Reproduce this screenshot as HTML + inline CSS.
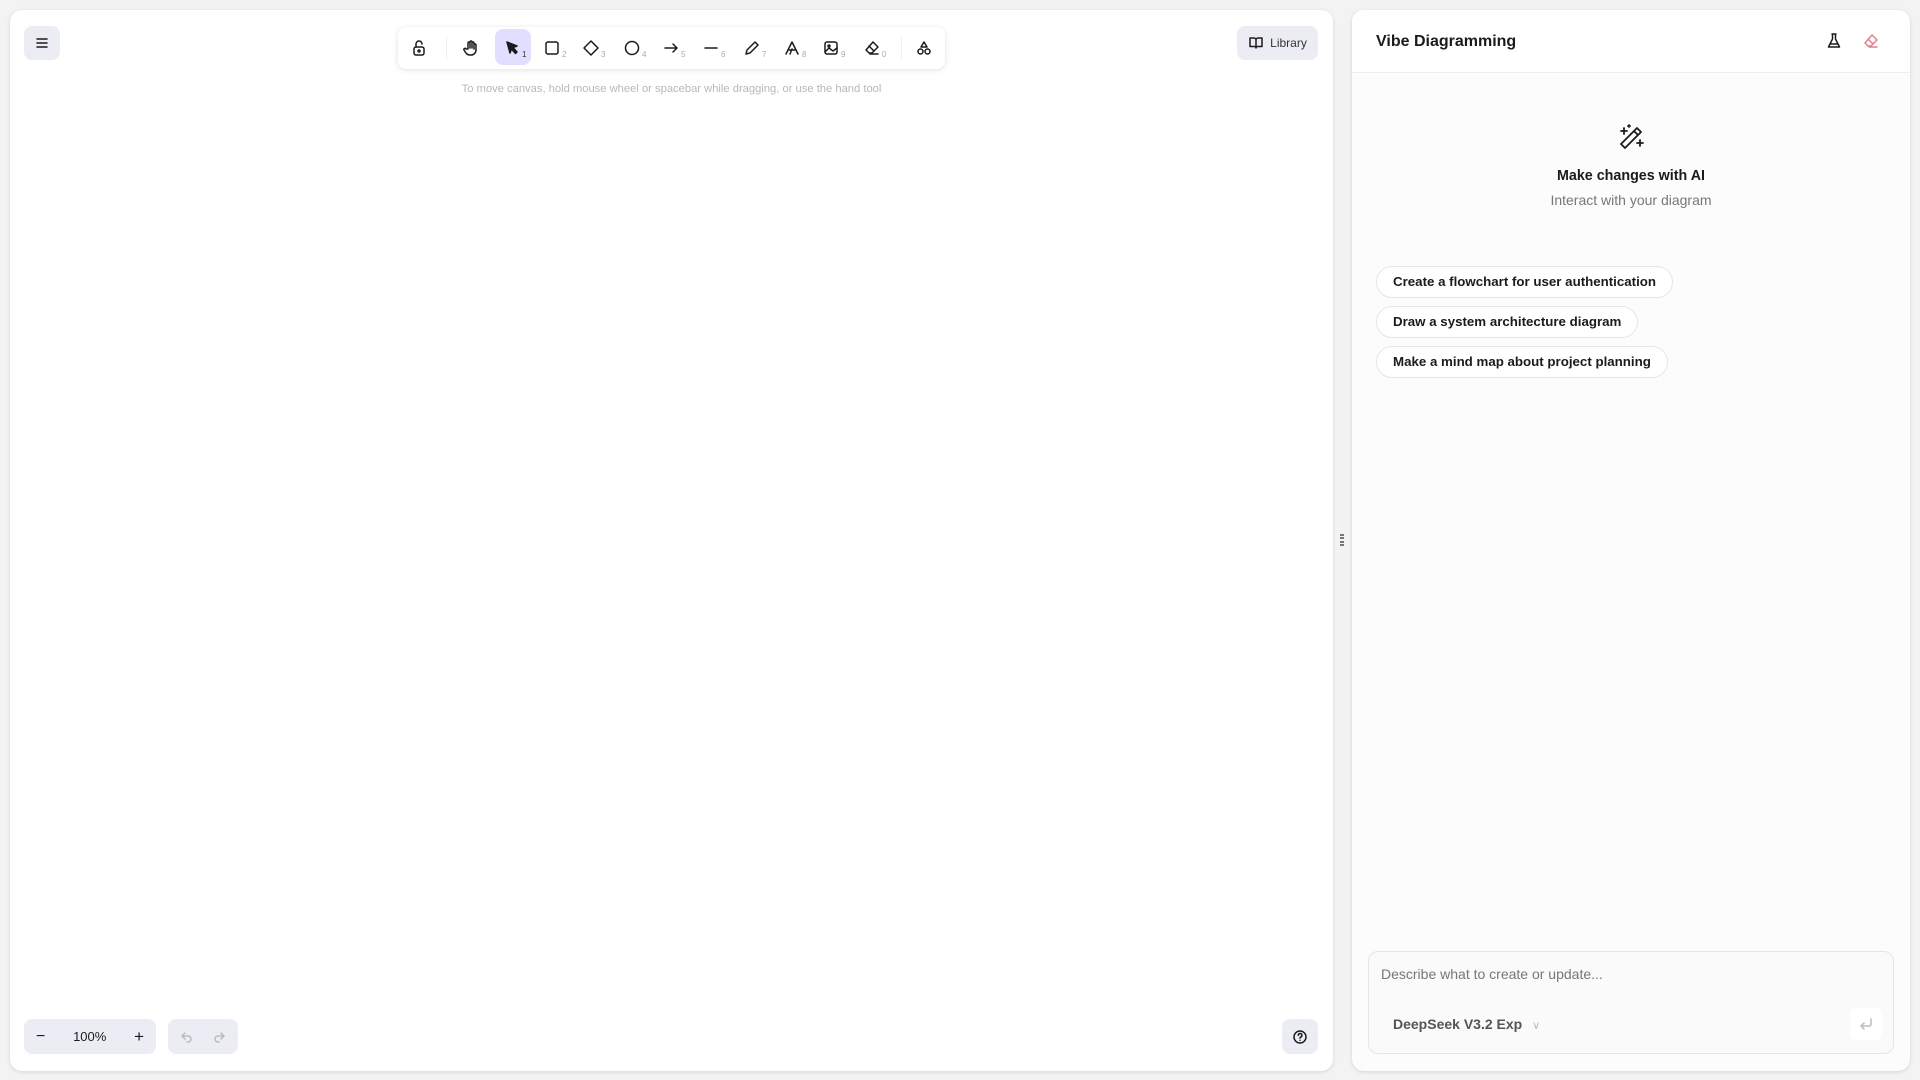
<!DOCTYPE html>
<html><head><meta charset="utf-8"><style>
*{box-sizing:border-box;margin:0;padding:0}
body{width:1920px;height:1080px;background:#f3f3f4;font-family:"Liberation Sans",sans-serif;position:relative;overflow:hidden}
.abs{position:absolute}
.canvas{left:10px;top:10px;width:1323px;height:1061px;background:#fff;border-radius:12px;box-shadow:0 1px 4px rgba(0,0,0,.12)}
.panel{left:1352px;top:10px;width:558px;height:1061px;background:#fcfcfc;border-radius:12px;box-shadow:0 1px 4px rgba(0,0,0,.12);overflow:hidden}
.btn{background:#ececf4;border-radius:8px;display:flex;align-items:center;justify-content:center}
.tb{left:398px;top:27px;width:547px;height:42px;background:#fff;border-radius:8px;box-shadow:0 1px 6px rgba(0,0,0,.12)}
.ic{position:absolute;top:11px;width:20px;height:20px}
.num{position:absolute;top:23px;font-size:8px;color:#aaa}
svg{fill:none;stroke:#1b1b1f;stroke-width:1.5;stroke-linecap:round;stroke-linejoin:round}
.chip{position:absolute;left:24px;height:32px;border:1px solid #e6e6e6;border-radius:16px;background:#fff;font-size:13.3px;font-weight:bold;color:#1b1b1f;padding:0 16px;line-height:30px;white-space:nowrap}
</style></head><body>
<div class="abs canvas"></div>
<div class="abs btn" style="left:24px;top:26px;width:36px;height:34px"><svg width="16" height="16" viewBox="0 0 16 16"><path d="M3 4h10M3 8h10M3 12h10"/></svg></div>
<div class="abs tb">
 <svg class="ic" style="left:11px" viewBox="0 0 20 20"><rect x="5" y="9" width="10" height="8" rx="2"/><path d="M7 9V6a3 3 0 0 1 6 0"/><circle cx="10" cy="13" r="1"/></svg>
 <div class="abs" style="left:48px;top:10px;width:1px;height:22px;background:#eee"></div>
 <svg class="ic" style="left:63px" viewBox="0 0 20 20"><path d="M7 11V5a1 1 0 0 1 2 0v5V4a1 1 0 0 1 2 0v6V5a1 1 0 0 1 2 0v6V7a1 1 0 0 1 2 0v5a5 5 0 0 1-5 5h-1a5 5 0 0 1-4-2l-2-3a1 1 0 0 1 2-1z"/></svg>
 <div class="abs" style="left:97px;top:2px;width:36px;height:36px;background:#e0dfff;border-radius:8px"></div>
 <svg class="ic" style="left:104px" viewBox="0 0 20 20"><path d="M5 4l10 4-4 1.5L15 14l-1.5 1.5L9.5 11 8 15z" fill="#1b1b1f"/></svg><span class="num" style="left:124px;color:#333">1</span>
 <svg class="ic" style="left:144px" viewBox="0 0 20 20"><rect x="4" y="4" width="12" height="12" rx="2"/></svg><span class="num" style="left:164px">2</span>
 <svg class="ic" style="left:183px" viewBox="0 0 20 20"><path d="M10 3l7 7-7 7-7-7z"/></svg><span class="num" style="left:203px">3</span>
 <svg class="ic" style="left:224px" viewBox="0 0 20 20"><circle cx="10" cy="10" r="6.5"/></svg><span class="num" style="left:244px">4</span>
 <svg class="ic" style="left:263px" viewBox="0 0 20 20"><path d="M4 10h12M12 6l4 4-4 4"/></svg><span class="num" style="left:283px">5</span>
 <svg class="ic" style="left:303px" viewBox="0 0 20 20"><path d="M4 10h12"/></svg><span class="num" style="left:323px">6</span>
 <svg class="ic" style="left:344px" viewBox="0 0 20 20"><path d="M13 4l3 3-8 8-4 1 1-4z"/></svg><span class="num" style="left:364px">7</span>
 <svg class="ic" style="left:384px" viewBox="0 0 20 20"><path d="M4 16l6-12 6 12M6 12h8M8 16l2-5"/></svg><span class="num" style="left:404px">8</span>
 <svg class="ic" style="left:423px" viewBox="0 0 20 20"><rect x="4" y="4" width="12" height="12" rx="2"/><circle cx="8" cy="8" r="1"/><path d="M4 14l4-4 4 3 4-3"/></svg><span class="num" style="left:443px">9</span>
 <svg class="ic" style="left:464px" viewBox="0 0 20 20"><path d="M8 16h8M11 4l5 5-6 6H7l-3-3z"/><path d="M7 8l5 5"/></svg><span class="num" style="left:484px">0</span>
 <div class="abs" style="left:503px;top:10px;width:1px;height:22px;background:#eee"></div>
 <svg class="ic" style="left:516px" viewBox="0 0 20 20"><path d="M10 4l3 5H7z"/><circle cx="6.5" cy="13.5" r="2.5"/><circle cx="13.5" cy="13.5" r="2.5"/></svg>
</div>
<div class="abs" style="left:398px;top:83px;width:547px;text-align:center;font-size:11.2px;color:#b8b8b8">To move canvas, hold mouse wheel or spacebar while dragging, or use the hand tool</div>
<div class="abs btn" style="left:1237px;top:26px;width:81px;height:34px;font-size:12px;color:#333;gap:6px"><svg width="16" height="16" viewBox="0 0 16 16"><path d="M2 3h4a2 2 0 0 1 2 2v8a1.5 1.5 0 0 0-1.5-1.5H2zM14 3h-4a2 2 0 0 0-2 2v8a1.5 1.5 0 0 1 1.5-1.5H14z"/></svg>Library</div>
<div class="abs btn" style="left:24px;top:1019px;width:132px;height:35px;justify-content:space-between;padding:0 12px;font-size:13px;color:#1b1b1f"><span style="font-size:16px">−</span><span>100%</span><span style="font-size:17px">+</span></div>
<div class="abs btn" style="left:168px;top:1019px;width:70px;height:35px;gap:18px"><svg width="14" height="14" viewBox="0 0 14 14" style="stroke:#bbb"><path d="M5 3L2 6l3 3M2 6h6a3 3 0 0 1 0 6H7"/></svg><svg width="14" height="14" viewBox="0 0 14 14" style="stroke:#bbb"><path d="M9 3l3 3-3 3M12 6H6a3 3 0 0 0 0 6h1"/></svg></div>
<div class="abs btn" style="left:1282px;top:1019px;width:36px;height:35px"><svg width="16" height="16" viewBox="0 0 16 16"><circle cx="8" cy="8" r="6"/><path d="M6.3 6.3a1.8 1.8 0 1 1 2.2 1.8c-.4.2-.5.5-.5 1M8 11.2v.1"/></svg></div>
<div class="abs" style="left:1340px;top:534px;width:4px;height:12px;border-left:2px dotted #777;border-right:2px dotted #777"></div>
<div class="abs panel">
 <div class="abs" style="left:0;top:0;width:558px;height:63px;background:#fff;border-bottom:1px solid #eee"></div>
 <div class="abs" style="left:24px;top:23px;font-size:16px;font-weight:bold;color:#1b1b1f">Vibe Diagramming</div>
 <svg class="abs" style="left:472px;top:21px" width="20" height="20" viewBox="0 0 20 20"><path d="M8 3h4M8.5 3v5L4.5 16h11L11.5 8V3M6 13h8"/></svg>
 <svg class="abs" style="left:509px;top:21px;stroke:#e57f8c" width="20" height="20" viewBox="0 0 20 20"><path d="M8 16h8M11 4l5 5-6 6H7l-3-3z"/><path d="M7 8l5 5"/></svg>
 <svg class="abs" style="left:263px;top:112px;stroke-width:1.8" width="32" height="32" viewBox="0 0 32 32"><path d="M22 6l4 4L10 26l-4-4zM19 9l4 4"/><path d="M9 6v6M6 9h6M25 18v6M22 21h6M14 3v2M13 4h2"/></svg>
 <div class="abs" style="left:0;width:558px;top:158px;text-align:center;font-size:14.3px;font-weight:bold;color:#1b1b1f">Make changes with AI</div>
 <div class="abs" style="left:0;width:558px;top:182px;text-align:center;font-size:14px;color:#777">Interact with your diagram</div>
 <div class="chip" style="top:256px">Create a flowchart for user authentication</div>
 <div class="chip" style="top:296px">Draw a system architecture diagram</div>
 <div class="chip" style="top:336px">Make a mind map about project planning</div>
 <div class="abs" style="left:16px;top:941px;width:526px;height:103px;border:1px solid #e6e6e6;border-radius:10px;background:#fafafa">
  <div class="abs" style="left:12px;top:14px;font-size:14px;color:#777">Describe what to create or update...</div>
  <div class="abs" style="left:24px;top:64px;font-size:14px;font-weight:bold;color:#555">DeepSeek V3.2 Exp <span style="color:#bbb;font-weight:normal;margin-left:6px;font-size:11px">∨</span></div>
  <div class="abs" style="left:481px;top:56px;width:32px;height:32px;background:#fff;border-radius:6px;display:flex;align-items:center;justify-content:center"><svg width="16" height="16" viewBox="0 0 16 16" style="stroke:#bbb"><path d="M13 3v5a2 2 0 0 1-2 2H3M6 7l-3 3 3 3"/></svg></div>
 </div>
</div>
</body></html>
